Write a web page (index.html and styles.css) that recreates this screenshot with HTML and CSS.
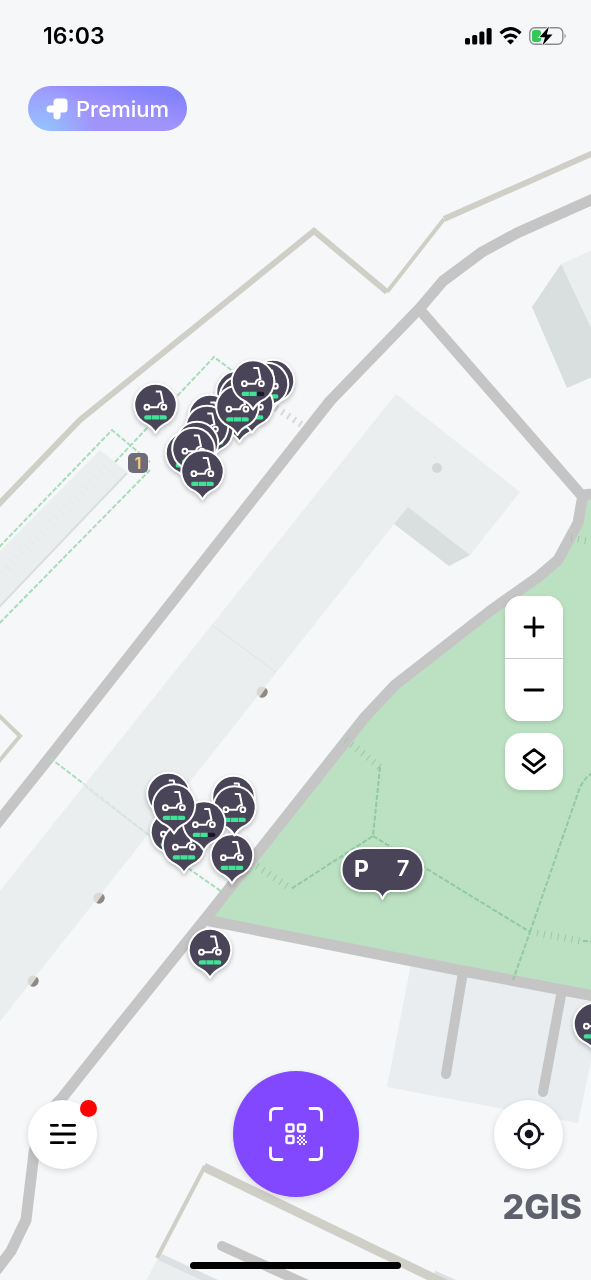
FILE: index.html
```html
<!DOCTYPE html>
<html lang="en">
<head>
    <meta charset="UTF-8">
    <meta name="viewport" content="width=device-width, initial-scale=1.0">
    <title>Scooter Map</title>
    <link rel="stylesheet" href="styles.css">
</head>
<body>
    <!-- Map -->
    <svg class="map" viewBox="0 0 591 1280" preserveAspectRatio="xMidYMid slice" role="img" aria-label="Map with scooters nearby">
        <defs>
            <g id="pin">
                <path class="pin-body" d="M-8 19.6A21.2 21.2 0 1 1 8 19.6Q3 22.5 0 28Q-3 22.5 -8 19.6Z"/>
                <g class="pin-scooter">
                    <circle cx="-8.6" cy="2.2" r="2.4"/>
                    <circle cx="8.4" cy="2.2" r="2.4"/>
                    <path d="M-6 2.2H2.5Q3 -2.2 7.5 -2.5L5.2 -13.5H0.3"/>
                </g>
            </g>
            <g id="scooter">
                <use href="#pin"/>
                <path class="charge" d="M-4.1 10.2H-9.2A2.2 2.2 0 0 0 -9.2 14.6H-4.1ZM-3.6 10.2H3.6V14.6H-3.6ZM4.1 10.2H9.2A2.2 2.2 0 0 1 9.2 14.6H4.1Z"/>
            </g>
            <g id="scooter-low">
                <use href="#pin"/>
                <path class="charge" d="M-4.1 10.2H-9.2A2.2 2.2 0 0 0 -9.2 14.6H-4.1ZM-3.6 10.2H3.6V14.6H-3.6Z"/>
                <path class="charge-empty" d="M4.1 10.2H9.2A2.2 2.2 0 0 1 9.2 14.6H4.1Z"/>
            </g>
            <g id="entrance">
                <circle r="5.5" fill="#dcd9d5"/>
                <path d="M3.9 -3.9A5.5 5.5 0 0 1 -2.5 4.9Z" fill="#8f8983"/>
            </g>
        </defs>

        <!-- Park and parking lot -->
        <path class="lot" d="M411 964L387 1087L578 1123L606 990Z"/>
        <path class="park" d="M210 917L365 717L395 685L490 611L538 577L558 560L578 523L583 495L700 480V1018L591 996Z"/>

        <!-- Buildings -->
        <path class="building" d="M396 394L520 492L470 555L408 507L394 524L-60 1097V966Z"/>
        <path class="building-side" d="M408 507L470 555L449 566L394 524Z"/>
        <circle cx="437" cy="468" r="5" fill="#d5d7d7"/>
        <path class="building-side" d="M532 307L561 264L700 400V330L567 388Z"/>
        <path class="building" d="M561 264L700 203V560Z"/>
        <path class="building" d="M100 450L127 472L-60 668V612Z"/>
        <path class="building-edge" d="M127 473L-60 669"/>
        <path class="building-ticks" d="M107 468L-10 585"/>
        <path class="building" d="M158 1258L240 1296L136 1300Z"/>
        <path class="building-band" d="M160 1257L240 1294"/>
        <path class="building-band" d="M434 1274L470 1290"/>
        <path class="wall" d="M212 625L276 672M85 787L155 840"/>

        <!-- Fences -->
        <path class="fence" d="M-60 563L0 503L80 420L314 231L387 292"/>
        <path class="fence fence-thin" d="M387 292L444 219"/>
        <path class="fence" d="M444 219L591 154L700 105"/>
        <path class="fence fence-thin" d="M-20 697L20 736L-20 784"/>
        <path class="fence fence-wide" d="M204 1167L450 1286"/>
        <path class="fence fence-thin" d="M205 1166L157 1258"/>

        <!-- Roads -->
        <path class="road" d="M700 153L591 200L517 233L482 252L443 281L420 308L330 401L50 757L-60 895"/>
        <path class="road" d="M420 310L583 497"/>
        <path class="road" d="M700 480L583 495L578 523L558 560L538 577L490 611L395 685L365 717L210 913L108 1040L62 1098Q40 1120 34 1153L26 1220L11 1251L-30 1305"/>
        <path class="road" d="M206 920L463 971L700 1016"/>
        <path class="road road-small" d="M463 972L446 1074M562 990L543 1092M222 1246L310 1286"/>

        <!-- Footpaths -->
        <path class="footpath" d="M-20 567L112 430L150 462M115 462L214 357L242 378M-20 643L150 470"/>
        <path class="footpath" d="M50 758L84 784M188 868L222 892"/>
        <path class="footpath footpath-faint" d="M84 784L155 840"/>
        <path class="footpath footpath-park" d="M380 767L373 836L291 889M373 836L530 932L513 980M530 932L579 790Q584 776 600 768M583 941L610 943"/>
        <path class="crossing" d="M346 740L380 767M257 866L291 889M537 933L580 941M571 538L600 543"/>
        <path class="crossing crossing-light" d="M276 408L304 426"/>

        <use href="#entrance" x="262" y="692"/>
        <use href="#entrance" x="99" y="898"/>
        <use href="#entrance" x="33" y="981"/>

        <rect x="128" y="453" width="20" height="20" rx="5" fill="#6f6b78"/>
        <text class="map-badge" x="138" y="469">1</text>

        <!-- Scooters, back to front -->
        <g class="pins">
            <use href="#scooter" x="155.5" y="405"/>
            <use href="#scooter" x="273" y="381"/>
            <use href="#scooter" x="267" y="384"/>
            <use href="#scooter" x="237.5" y="392"/>
            <use href="#scooter" x="241" y="397"/>
            <use href="#scooter" x="210" y="416"/>
            <use href="#scooter" x="239.5" y="414"/>
            <use href="#scooter" x="252" y="405"/>
            <use href="#scooter" x="212" y="430"/>
            <use href="#scooter" x="207" y="427"/>
            <use href="#scooter" x="237.5" y="407"/>
            <use href="#scooter-low" x="253" y="381.5"/>
            <use href="#scooter" x="187" y="453"/>
            <use href="#scooter" x="197" y="443"/>
            <use href="#scooter" x="193.5" y="449"/>
            <use href="#scooter" x="202.5" y="471.5"/>

            <use href="#scooter" x="168.5" y="794"/>
            <use href="#scooter" x="233.5" y="797"/>
            <use href="#scooter" x="172" y="832"/>
            <use href="#scooter" x="184" y="845"/>
            <use href="#scooter" x="232" y="855.5"/>
            <use href="#scooter" x="234.5" y="807.5"/>
            <use href="#scooter-low" x="204" y="822.5"/>
            <use href="#scooter" x="174" y="805.5"/>

            <use href="#scooter" x="210" y="950"/>
            <use href="#scooter" x="595" y="1024"/>
        </g>

        <!-- Parking -->
        <g class="pins">
            <path class="pin-body" d="M363 848H402A21.5 21.5 0 0 1 402 891H390Q385 892 382.5 899Q380 892 375 891H363A21.5 21.5 0 0 1 363 848Z"/>
            <text class="parking-letter" x="354" y="877">P</text>
            <text class="parking-count" x="403" y="876">7</text>
        </g>
    </svg>

    <div class="screen">
        <header class="status-bar">
            <span class="time">16:03</span>
            <div class="status-icons">
                <svg width="27" height="18" viewBox="0 0 27 18" aria-hidden="true">
                    <rect x="0" y="11" width="5" height="6.5" rx="1.5"/>
                    <rect x="7.2" y="8" width="5" height="9.5" rx="1.5"/>
                    <rect x="14.4" y="4.5" width="5" height="13" rx="1.5"/>
                    <rect x="21.6" y="1" width="5" height="16.5" rx="1.5"/>
                </svg>
                <svg width="23" height="18" viewBox="0 0 23 18" aria-hidden="true">
                    <path d="M1.5 6.2Q11.5 -2.8 21.5 6.2M5.3 10.8Q11.5 5.3 17.7 10.8" fill="none" stroke="#000" stroke-width="3.2"/>
                    <path d="M11.5 17.5L8 14Q11.5 11.2 15 14Z"/>
                </svg>
                <svg width="38" height="20" viewBox="0 0 38 20" aria-hidden="true">
                    <rect x="0.8" y="1.8" width="33" height="16.4" rx="5" fill="none" stroke="#8b8d90" stroke-width="1.4"/>
                    <path d="M35.5 7.5Q38 10 35.5 12.5Z" fill="#8b8d90"/>
                    <rect x="3" y="4" width="9" height="12" rx="2.5" fill="#34c759"/>
                    <path d="M20 0.5L10.5 11.2H16L13.5 19.5L23.5 8.5H17.8Z" stroke="#f5f7f9" stroke-width="1.6" paint-order="stroke"/>
                </svg>
            </div>
        </header>

        <button class="premium" type="button">
            <svg width="22" height="22" viewBox="0 0 22 22" aria-hidden="true">
                <rect x="7.5" y="0.5" width="14" height="14" rx="3.5"/>
                <rect x="0.5" y="7.5" width="14" height="7" rx="3.5"/>
                <rect x="7.5" y="8" width="7" height="13.5" rx="3.5"/>
            </svg>
            Premium
        </button>

        <div class="map-controls">
            <div class="zoom">
                <button type="button" aria-label="Zoom in">
                    <svg width="22" height="22" viewBox="0 0 22 22" aria-hidden="true"><path d="M11 2V20M2 11H20"/></svg>
                </button>
                <button type="button" aria-label="Zoom out">
                    <svg width="22" height="22" viewBox="0 0 22 22" aria-hidden="true"><path d="M2 11H20"/></svg>
                </button>
            </div>
            <button class="layers" type="button" aria-label="Map layers">
                <svg width="26" height="30" viewBox="0 0 26 30" aria-hidden="true"><path d="M13 2.5L22.5 9.6Q23.3 10.4 22.5 11.2L13 18.6L3.5 11.2Q2.7 10.4 3.5 9.6ZM2 17.5L13 26L24 17.5"/></svg>
            </button>
        </div>

        <nav class="actions">
            <button class="round-btn" type="button" aria-label="Menu">
                <svg width="28" height="22" viewBox="0 0 28 22" fill="none" stroke="#000" stroke-width="2.8" stroke-linecap="round" aria-hidden="true">
                    <path d="M2.3 2.3H8.5M14 2.3H25.7M2.3 11H25.7M2.3 19.7H14M19.5 19.7H25.7"/>
                </svg>
                <span class="alert-dot"></span>
            </button>
            <button class="scan-btn" type="button" aria-label="Scan QR code">
                <svg width="56" height="56" viewBox="0 0 56 56" fill="none" stroke="#fff" stroke-width="2.8" stroke-linecap="round" aria-hidden="true">
                    <path d="M2.5 14V7Q2.5 2.5 7 2.5H14M42 2.5H49Q53.5 2.5 53.5 7V14M53.5 42V49Q53.5 53.5 49 53.5H42M14 53.5H7Q2.5 53.5 2.5 49V42"/>
                    <g stroke-width="2.4">
                        <rect x="18.5" y="18.5" width="7" height="7" rx="1.5"/>
                        <rect x="30" y="18.5" width="7" height="7" rx="1.5"/>
                        <rect x="18.5" y="30" width="7" height="7" rx="1.5"/>
                    </g>
                    <path fill="#fff" stroke="none" d="M31 29h2v2h-2zM35 29h2v2h-2zM29 31h2v2h-2zM33 31h2v2h-2zM31 33h2v2h-2zM35 33h2v2h-2zM29 35h2v2h-2zM33 35h2v2h-2zM37 35h2v2h-2zM31 37h2v2h-2zM35 37h2v2h-2z"/>
                </svg>
            </button>
            <button class="round-btn" type="button" aria-label="My location">
                <svg width="32" height="32" viewBox="0 0 32 32" fill="none" stroke="#15121f" stroke-width="2.6" stroke-linecap="round" aria-hidden="true">
                    <circle cx="16" cy="16" r="10.5"/>
                    <circle cx="16" cy="16" r="4.3" fill="#15121f" stroke="none"/>
                    <path d="M16 2V5M16 27V30M2 16H5M27 16H30"/>
                </svg>
            </button>
        </nav>

        <span class="map-logo">2GIS</span>
        <div class="home-indicator"></div>
    </div>
</body>
</html>
```
FILE: styles.css
```css
/* Global Styles */
* {
    box-sizing: border-box;
}

body {
    font-family: Inter, 'Liberation Sans', sans-serif;
    margin: 0;
    background-color: #f5f7f9;
    color: #000;
}

button {
    display: flex;
    align-items: center;
    justify-content: center;
    padding: 0;
    border: none;
    font-family: inherit;
    cursor: pointer;
}

/* Map */
.map {
    position: absolute;
    top: 0;
    left: 0;
    width: 100%;
    height: 100%;
}

.park {
    fill: #bce1c2;
}

.lot {
    fill: #e9edf0;
}

.building {
    fill: #eaeeef;
}

.building-side {
    fill: #d9dede;
}

.building-edge,
.wall {
    fill: none;
    stroke: #dadcdf;
    stroke-width: 2;
}

.wall {
    stroke: #e0e3e4;
    stroke-width: 1;
}

.building-ticks {
    stroke: #e6eaeb;
    stroke-width: 10;
    stroke-dasharray: 1 6;
}

.building-band {
    stroke: #dde1e3;
    stroke-width: 7;
}

.fence {
    fill: none;
    stroke: #d0cfc7;
    stroke-width: 6;
}

.fence-thin {
    stroke-width: 4;
}

.fence-wide {
    stroke-width: 9;
}

.road {
    fill: none;
    stroke: #c6c5c6;
    stroke-width: 11;
    stroke-linejoin: round;
}

.road-small {
    stroke-width: 10;
    stroke-linecap: round;
}

.footpath {
    fill: none;
    stroke: #aadcb9;
    stroke-width: 2;
    stroke-dasharray: 5 2;
}

.footpath-faint {
    opacity: 0.3;
}

.footpath-park {
    stroke: #8fcaa2;
}

.crossing {
    fill: none;
    stroke: #9fc5a8;
    stroke-width: 7;
    stroke-dasharray: 1 6;
}

.crossing-light {
    stroke: #d6d8da;
    stroke-dasharray: 2 5;
}

.map-badge {
    fill: #f2cf74;
    font-size: 16px;
    font-weight: 600;
    text-anchor: middle;
}

/* Map Pins */
.pins {
    filter: drop-shadow(0 2px 2px rgba(0, 0, 0, 0.25));
}

.pin-body {
    fill: #4a4458;
    stroke: #fff;
    stroke-width: 2;
    stroke-linejoin: round;
}

.pin-scooter {
    fill: none;
    stroke: #fff;
    stroke-width: 2;
    stroke-linejoin: round;
}

.charge {
    fill: #3fe396;
}

.charge-empty {
    fill: #1b1726;
}

.parking-letter,
.parking-count {
    fill: #fff;
    font-size: 23px;
    font-weight: 700;
}

.parking-count {
    font-size: 22px;
    font-weight: 600;
    text-anchor: middle;
}

/* Screen */
.screen {
    position: relative;
    display: flex;
    flex-direction: column;
    min-height: 100vh;
    padding: 21px 28px 11px;
}

.status-bar {
    display: flex;
    align-items: center;
    justify-content: space-between;
    height: 30px;
    margin-bottom: 35px;
    margin-right: -4px;
    padding-left: 15px;
}

.time {
    font-size: 23px;
    font-weight: 600;
}

.status-icons {
    display: flex;
    align-items: center;
    gap: 7px;
}

.premium {
    align-self: flex-start;
    gap: 8px;
    height: 45px;
    padding: 0 18px;
    border-radius: 23px;
    background: radial-gradient(circle at 8% 110%, #92c8ff 0, rgba(146, 200, 255, 0) 35%), linear-gradient(15deg, #a094fb 50%, #8482fb 85%);
    color: #fff;
    font-size: 22px;
    font-weight: 500;
}

.premium svg {
    fill: #fff;
}

/* Map Controls */
.map-controls {
    display: flex;
    flex-direction: column;
    align-self: flex-end;
    gap: 12px;
    width: 58px;
    margin-top: auto;
    margin-bottom: 281px;
}

.map-controls svg {
    fill: none;
    stroke: #000;
    stroke-width: 2.8;
    stroke-linecap: round;
    stroke-linejoin: round;
}

.zoom,
.layers {
    border-radius: 16px;
    background-color: #fff;
    box-shadow: 0 2px 5px rgba(0, 0, 0, 0.14);
}

.zoom {
    overflow: hidden;
}

.zoom button {
    width: 100%;
    height: 62px;
    background-color: #fff;
}

.zoom button + button {
    height: 63px;
    border-top: 1px solid #c9c9cb;
}

.layers {
    height: 57px;
}

/* Bottom Actions */
.actions {
    display: flex;
    align-items: center;
    justify-content: space-between;
    margin-bottom: 65px;
}

.round-btn,
.scan-btn {
    position: relative;
    border-radius: 50%;
    box-shadow: 0 2px 6px rgba(0, 0, 0, 0.14);
}

.round-btn {
    width: 69px;
    height: 69px;
    background-color: #fff;
}

.scan-btn {
    width: 126px;
    height: 126px;
    background-color: #8148ff;
}

.alert-dot {
    position: absolute;
    top: 0;
    right: 0;
    width: 17px;
    height: 17px;
    border-radius: 50%;
    background-color: #f00;
}

.map-logo {
    position: absolute;
    right: 9px;
    bottom: 53px;
    color: #5e616c;
    font-size: 34px;
    font-weight: 800;
    line-height: 40px;
}

.home-indicator {
    align-self: center;
    width: 211px;
    height: 7px;
    border-radius: 4px;
    background-color: #000;
}
```
